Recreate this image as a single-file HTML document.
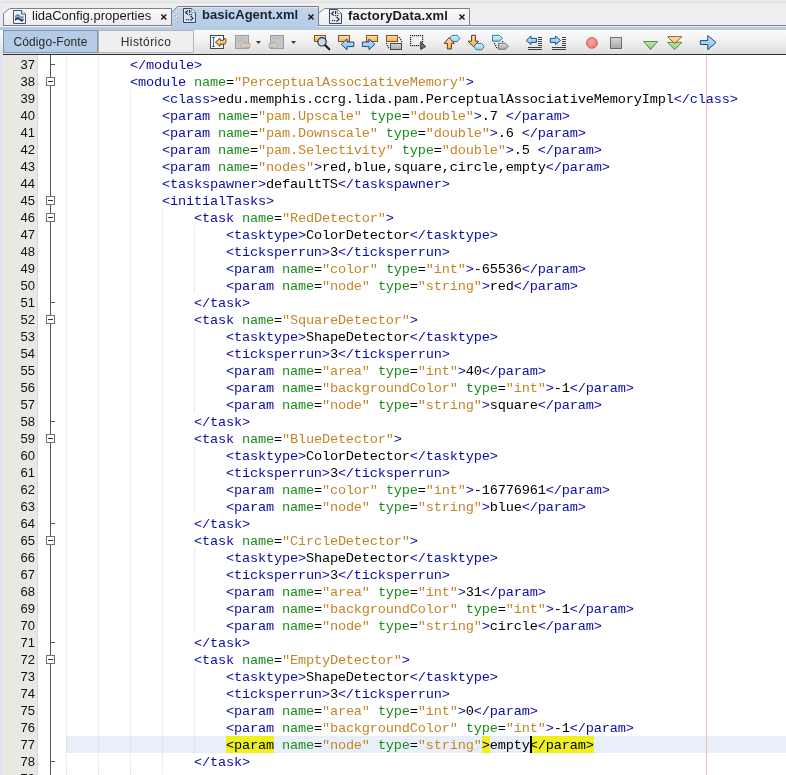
<!DOCTYPE html>
<html><head><meta charset="utf-8"><title>basicAgent.xml</title>
<style>
html,body{margin:0;padding:0;}
body{width:786px;height:775px;overflow:hidden;position:relative;background:#fff;
 font-family:"Liberation Sans",sans-serif;}
.abs{position:absolute;}
#code{position:absolute;left:0;top:0;width:786px;height:775px;overflow:hidden;will-change:transform;}
.ln{position:absolute;left:66px;height:17px;line-height:17px;white-space:pre;
 font-family:"Liberation Mono",monospace;font-size:13.6px;letter-spacing:-0.162px;color:#000;margin-top:1px;}
.t{color:#0c0ca2;}
.a{color:#1e8c1e;}
.v{color:#c4852a;}
.x{color:#000;}
.y{background:#f0f01c;}
.no{position:absolute;left:3px;width:32px;height:17px;line-height:17px;text-align:right;
 font-family:"Liberation Sans",sans-serif;font-size:13px;color:#111;}
.g{position:absolute;width:1px;background-image:linear-gradient(to bottom,#d9d9d9 50%,rgba(255,255,255,0) 50%);background-size:1px 2px;}
.fb{position:absolute;left:46px;width:7px;height:7px;border:1px solid #707070;background:#fff;}
.fb i{position:absolute;left:1px;top:3px;width:5px;height:1px;background:#333;}
.fe{position:absolute;left:50px;width:5px;height:1px;background:#555;}
</style></head><body>
<div id="code">

<div class="abs" style="left:0;top:55px;width:3px;height:720px;background:#dfe5ee"></div>
<div class="abs" style="left:3px;top:55px;width:34px;height:720px;background:#e9e8e2"></div>
<div class="abs" style="left:37px;top:55px;width:1px;height:720px;background:#d8d8d8"></div>
<div class="abs" style="left:66px;top:736px;width:720px;height:17px;background:#e9eff8"></div>
<div class="abs" style="left:50px;top:55px;width:1px;height:720px;background:#555"></div>
<div class="abs" style="left:706px;top:55px;width:1px;height:720px;background:#f2b8b8"></div>
<div class="g" style="left:66px;top:56px;height:731px"></div>
<div class="g" style="left:98px;top:56px;height:731px"></div>
<div class="g" style="left:130px;top:90px;height:697px"></div>
<div class="g" style="left:162px;top:209px;height:578px"></div>
<div class="g" style="left:194px;top:226px;height:68px"></div>
<div class="g" style="left:194px;top:328px;height:85px"></div>
<div class="g" style="left:194px;top:447px;height:68px"></div>
<div class="g" style="left:194px;top:549px;height:85px"></div>
<div class="g" style="left:194px;top:668px;height:85px"></div>
<div class="no" style="top:56px">37</div>
<div class="fe" style="top:64px"></div>
<div class="ln" style="top:56px">        <span class="t">&lt;/module&gt;</span></div>
<div class="no" style="top:73px">38</div>
<div class="fb" style="top:77px"><i></i></div>
<div class="ln" style="top:73px">        <span class="t">&lt;module</span><span class="x"> </span><span class="a">name</span><span class="x">=</span><span class="v">"PerceptualAssociativeMemory"</span><span class="t">&gt;</span></div>
<div class="no" style="top:90px">39</div>
<div class="ln" style="top:90px">            <span class="t">&lt;class&gt;</span><span class="x">edu.memphis.ccrg.lida.pam.PerceptualAssociativeMemoryImpl</span><span class="t">&lt;/class&gt;</span></div>
<div class="no" style="top:107px">40</div>
<div class="ln" style="top:107px">            <span class="t">&lt;param</span><span class="x"> </span><span class="a">name</span><span class="x">=</span><span class="v">"pam.Upscale"</span><span class="x"> </span><span class="a">type</span><span class="x">=</span><span class="v">"double"</span><span class="t">&gt;</span><span class="x">.7 </span><span class="t">&lt;/param&gt;</span></div>
<div class="no" style="top:124px">41</div>
<div class="ln" style="top:124px">            <span class="t">&lt;param</span><span class="x"> </span><span class="a">name</span><span class="x">=</span><span class="v">"pam.Downscale"</span><span class="x"> </span><span class="a">type</span><span class="x">=</span><span class="v">"double"</span><span class="t">&gt;</span><span class="x">.6 </span><span class="t">&lt;/param&gt;</span></div>
<div class="no" style="top:141px">42</div>
<div class="ln" style="top:141px">            <span class="t">&lt;param</span><span class="x"> </span><span class="a">name</span><span class="x">=</span><span class="v">"pam.Selectivity"</span><span class="x"> </span><span class="a">type</span><span class="x">=</span><span class="v">"double"</span><span class="t">&gt;</span><span class="x">.5 </span><span class="t">&lt;/param&gt;</span></div>
<div class="no" style="top:158px">43</div>
<div class="ln" style="top:158px">            <span class="t">&lt;param</span><span class="x"> </span><span class="a">name</span><span class="x">=</span><span class="v">"nodes"</span><span class="t">&gt;</span><span class="x">red,blue,square,circle,empty</span><span class="t">&lt;/param&gt;</span></div>
<div class="no" style="top:175px">44</div>
<div class="ln" style="top:175px">            <span class="t">&lt;taskspawner&gt;</span><span class="x">defaultTS</span><span class="t">&lt;/taskspawner&gt;</span></div>
<div class="no" style="top:192px">45</div>
<div class="fb" style="top:196px"><i></i></div>
<div class="ln" style="top:192px">            <span class="t">&lt;initialTasks</span><span class="t">&gt;</span></div>
<div class="no" style="top:209px">46</div>
<div class="fb" style="top:213px"><i></i></div>
<div class="ln" style="top:209px">                <span class="t">&lt;task</span><span class="x"> </span><span class="a">name</span><span class="x">=</span><span class="v">"RedDetector"</span><span class="t">&gt;</span></div>
<div class="no" style="top:226px">47</div>
<div class="ln" style="top:226px">                    <span class="t">&lt;tasktype&gt;</span><span class="x">ColorDetector</span><span class="t">&lt;/tasktype&gt;</span></div>
<div class="no" style="top:243px">48</div>
<div class="ln" style="top:243px">                    <span class="t">&lt;ticksperrun&gt;</span><span class="x">3</span><span class="t">&lt;/ticksperrun&gt;</span></div>
<div class="no" style="top:260px">49</div>
<div class="ln" style="top:260px">                    <span class="t">&lt;param</span><span class="x"> </span><span class="a">name</span><span class="x">=</span><span class="v">"color"</span><span class="x"> </span><span class="a">type</span><span class="x">=</span><span class="v">"int"</span><span class="t">&gt;</span><span class="x">-65536</span><span class="t">&lt;/param&gt;</span></div>
<div class="no" style="top:277px">50</div>
<div class="ln" style="top:277px">                    <span class="t">&lt;param</span><span class="x"> </span><span class="a">name</span><span class="x">=</span><span class="v">"node"</span><span class="x"> </span><span class="a">type</span><span class="x">=</span><span class="v">"string"</span><span class="t">&gt;</span><span class="x">red</span><span class="t">&lt;/param&gt;</span></div>
<div class="no" style="top:294px">51</div>
<div class="fe" style="top:302px"></div>
<div class="ln" style="top:294px">                <span class="t">&lt;/task&gt;</span></div>
<div class="no" style="top:311px">52</div>
<div class="fb" style="top:315px"><i></i></div>
<div class="ln" style="top:311px">                <span class="t">&lt;task</span><span class="x"> </span><span class="a">name</span><span class="x">=</span><span class="v">"SquareDetector"</span><span class="t">&gt;</span></div>
<div class="no" style="top:328px">53</div>
<div class="ln" style="top:328px">                    <span class="t">&lt;tasktype&gt;</span><span class="x">ShapeDetector</span><span class="t">&lt;/tasktype&gt;</span></div>
<div class="no" style="top:345px">54</div>
<div class="ln" style="top:345px">                    <span class="t">&lt;ticksperrun&gt;</span><span class="x">3</span><span class="t">&lt;/ticksperrun&gt;</span></div>
<div class="no" style="top:362px">55</div>
<div class="ln" style="top:362px">                    <span class="t">&lt;param</span><span class="x"> </span><span class="a">name</span><span class="x">=</span><span class="v">"area"</span><span class="x"> </span><span class="a">type</span><span class="x">=</span><span class="v">"int"</span><span class="t">&gt;</span><span class="x">40</span><span class="t">&lt;/param&gt;</span></div>
<div class="no" style="top:379px">56</div>
<div class="ln" style="top:379px">                    <span class="t">&lt;param</span><span class="x"> </span><span class="a">name</span><span class="x">=</span><span class="v">"backgroundColor"</span><span class="x"> </span><span class="a">type</span><span class="x">=</span><span class="v">"int"</span><span class="t">&gt;</span><span class="x">-1</span><span class="t">&lt;/param&gt;</span></div>
<div class="no" style="top:396px">57</div>
<div class="ln" style="top:396px">                    <span class="t">&lt;param</span><span class="x"> </span><span class="a">name</span><span class="x">=</span><span class="v">"node"</span><span class="x"> </span><span class="a">type</span><span class="x">=</span><span class="v">"string"</span><span class="t">&gt;</span><span class="x">square</span><span class="t">&lt;/param&gt;</span></div>
<div class="no" style="top:413px">58</div>
<div class="fe" style="top:421px"></div>
<div class="ln" style="top:413px">                <span class="t">&lt;/task&gt;</span></div>
<div class="no" style="top:430px">59</div>
<div class="fb" style="top:434px"><i></i></div>
<div class="ln" style="top:430px">                <span class="t">&lt;task</span><span class="x"> </span><span class="a">name</span><span class="x">=</span><span class="v">"BlueDetector"</span><span class="t">&gt;</span></div>
<div class="no" style="top:447px">60</div>
<div class="ln" style="top:447px">                    <span class="t">&lt;tasktype&gt;</span><span class="x">ColorDetector</span><span class="t">&lt;/tasktype&gt;</span></div>
<div class="no" style="top:464px">61</div>
<div class="ln" style="top:464px">                    <span class="t">&lt;ticksperrun&gt;</span><span class="x">3</span><span class="t">&lt;/ticksperrun&gt;</span></div>
<div class="no" style="top:481px">62</div>
<div class="ln" style="top:481px">                    <span class="t">&lt;param</span><span class="x"> </span><span class="a">name</span><span class="x">=</span><span class="v">"color"</span><span class="x"> </span><span class="a">type</span><span class="x">=</span><span class="v">"int"</span><span class="t">&gt;</span><span class="x">-16776961</span><span class="t">&lt;/param&gt;</span></div>
<div class="no" style="top:498px">63</div>
<div class="ln" style="top:498px">                    <span class="t">&lt;param</span><span class="x"> </span><span class="a">name</span><span class="x">=</span><span class="v">"node"</span><span class="x"> </span><span class="a">type</span><span class="x">=</span><span class="v">"string"</span><span class="t">&gt;</span><span class="x">blue</span><span class="t">&lt;/param&gt;</span></div>
<div class="no" style="top:515px">64</div>
<div class="fe" style="top:523px"></div>
<div class="ln" style="top:515px">                <span class="t">&lt;/task&gt;</span></div>
<div class="no" style="top:532px">65</div>
<div class="fb" style="top:536px"><i></i></div>
<div class="ln" style="top:532px">                <span class="t">&lt;task</span><span class="x"> </span><span class="a">name</span><span class="x">=</span><span class="v">"CircleDetector"</span><span class="t">&gt;</span></div>
<div class="no" style="top:549px">66</div>
<div class="ln" style="top:549px">                    <span class="t">&lt;tasktype&gt;</span><span class="x">ShapeDetector</span><span class="t">&lt;/tasktype&gt;</span></div>
<div class="no" style="top:566px">67</div>
<div class="ln" style="top:566px">                    <span class="t">&lt;ticksperrun&gt;</span><span class="x">3</span><span class="t">&lt;/ticksperrun&gt;</span></div>
<div class="no" style="top:583px">68</div>
<div class="ln" style="top:583px">                    <span class="t">&lt;param</span><span class="x"> </span><span class="a">name</span><span class="x">=</span><span class="v">"area"</span><span class="x"> </span><span class="a">type</span><span class="x">=</span><span class="v">"int"</span><span class="t">&gt;</span><span class="x">31</span><span class="t">&lt;/param&gt;</span></div>
<div class="no" style="top:600px">69</div>
<div class="ln" style="top:600px">                    <span class="t">&lt;param</span><span class="x"> </span><span class="a">name</span><span class="x">=</span><span class="v">"backgroundColor"</span><span class="x"> </span><span class="a">type</span><span class="x">=</span><span class="v">"int"</span><span class="t">&gt;</span><span class="x">-1</span><span class="t">&lt;/param&gt;</span></div>
<div class="no" style="top:617px">70</div>
<div class="ln" style="top:617px">                    <span class="t">&lt;param</span><span class="x"> </span><span class="a">name</span><span class="x">=</span><span class="v">"node"</span><span class="x"> </span><span class="a">type</span><span class="x">=</span><span class="v">"string"</span><span class="t">&gt;</span><span class="x">circle</span><span class="t">&lt;/param&gt;</span></div>
<div class="no" style="top:634px">71</div>
<div class="fe" style="top:642px"></div>
<div class="ln" style="top:634px">                <span class="t">&lt;/task&gt;</span></div>
<div class="no" style="top:651px">72</div>
<div class="fb" style="top:655px"><i></i></div>
<div class="ln" style="top:651px">                <span class="t">&lt;task</span><span class="x"> </span><span class="a">name</span><span class="x">=</span><span class="v">"EmptyDetector"</span><span class="t">&gt;</span></div>
<div class="no" style="top:668px">73</div>
<div class="ln" style="top:668px">                    <span class="t">&lt;tasktype&gt;</span><span class="x">ShapeDetector</span><span class="t">&lt;/tasktype&gt;</span></div>
<div class="no" style="top:685px">74</div>
<div class="ln" style="top:685px">                    <span class="t">&lt;ticksperrun&gt;</span><span class="x">3</span><span class="t">&lt;/ticksperrun&gt;</span></div>
<div class="no" style="top:702px">75</div>
<div class="ln" style="top:702px">                    <span class="t">&lt;param</span><span class="x"> </span><span class="a">name</span><span class="x">=</span><span class="v">"area"</span><span class="x"> </span><span class="a">type</span><span class="x">=</span><span class="v">"int"</span><span class="t">&gt;</span><span class="x">0</span><span class="t">&lt;/param&gt;</span></div>
<div class="no" style="top:719px">76</div>
<div class="ln" style="top:719px">                    <span class="t">&lt;param</span><span class="x"> </span><span class="a">name</span><span class="x">=</span><span class="v">"backgroundColor"</span><span class="x"> </span><span class="a">type</span><span class="x">=</span><span class="v">"int"</span><span class="t">&gt;</span><span class="x">-1</span><span class="t">&lt;/param&gt;</span></div>
<div class="no" style="top:736px">77</div>
<div class="abs" style="left:226px;top:736px;width:48px;height:17px;background:#f0f01e"></div>
<div class="abs" style="left:482px;top:736px;width:8px;height:17px;background:#f0f01e"></div>
<div class="abs" style="left:530px;top:736px;width:64px;height:17px;background:#f0f01e"></div>
<div class="ln" style="top:736px">                    <span class="x">&lt;param</span><span class="x"> </span><span class="a">name</span><span class="x">=</span><span class="v">"node"</span><span class="x"> </span><span class="a">type</span><span class="x">=</span><span class="v">"string"</span><span class="x">&gt;</span><span class="x">empty</span><span class="x">&lt;/param&gt;</span></div>
<div class="no" style="top:753px">78</div>
<div class="fe" style="top:761px"></div>
<div class="ln" style="top:753px">                <span class="t">&lt;/task&gt;</span></div>
<div class="no" style="top:770px">79</div>
<div class="ln" style="top:770px">                </div>
<div class="abs" id="caret" style="left:530px;top:736px;width:2px;height:17px;background:#000"></div>
</div>

<div id="hdr" class="abs" style="left:0;top:0;width:786px;height:55px;overflow:hidden;will-change:transform;">
<style>
#hdr .tabtxt{position:absolute;top:7px;height:18px;line-height:17px;font-size:13px;color:#1a1a1a;white-space:pre;}
#hdr .b{font-weight:bold;}
#hdr .btn{position:absolute;top:30px;height:23px;line-height:22px;text-align:center;font-size:12px;color:#2a2a2a;box-sizing:border-box;}
#hdr svg{position:absolute;overflow:visible;}
</style>
<!-- top strips -->
<div class="abs" style="left:0;top:0;width:786px;height:2px;background:#ebebeb"></div>
<div class="abs" style="left:0;top:2px;width:786px;height:1px;background:#d9dfe8"></div>
<div class="abs" style="left:0;top:3px;width:786px;height:22px;background:#eeeeee"></div>
<div class="abs" style="left:0;top:25px;width:786px;height:1px;background:#7c8188"></div>
<div class="abs" style="left:0;top:0;width:3px;height:55px;background:#e8ecf2"></div>
<!-- blue strip under tabs -->
<div class="abs" style="left:0;top:26px;width:786px;height:1px;background:#eaf1f8"></div>
<div class="abs" style="left:0;top:27px;width:786px;height:3px;background:#b6cae2"></div>
<!-- toolbar gradient -->
<div class="abs" style="left:0;top:30px;width:786px;height:24px;background:linear-gradient(to bottom,#fbfbfb 0%,#f1f1f1 45%,#dedede 100%)"></div>
<div class="abs" style="left:3px;top:54px;width:783px;height:1px;background:#2c2c2c"></div>

<!-- tabs drawn as svg -->
<svg width="786" height="30" style="left:0;top:0" shape-rendering="crispEdges">
 <defs>
  <linearGradient id="tg" x1="0" y1="0" x2="0" y2="1"><stop offset="0" stop-color="#fafafb"/><stop offset="1" stop-color="#ededf0"/></linearGradient>
  <linearGradient id="sg" x1="0" y1="0" x2="0" y2="1"><stop offset="0" stop-color="#c4d6ec"/><stop offset="1" stop-color="#b3c9e4"/></linearGradient>
 </defs>
 <!-- tab 1 -->
 <path d="M3.5 25.5 L3.5 13.5 L9.5 8.5 L171.5 8.5 L171.5 25.5 Z" fill="url(#tg)" stroke="#7c8188" stroke-width="1" shape-rendering="geometricPrecision"/>
 <!-- tab 3 -->
 <path d="M318.5 25.5 L318.5 13.5 L324.5 8.5 L469.5 8.5 L469.5 25.5 Z" fill="url(#tg)" stroke="#7c8188" stroke-width="1" shape-rendering="geometricPrecision"/>
 <!-- selected tab 2 -->
 <path d="M172 30 L172 12 L177.5 6.5 L318.5 6.5 L318.5 30 Z" fill="url(#sg)" stroke="none" shape-rendering="geometricPrecision"/>
 <path d="M178 7.5 L318 7.5" stroke="#dbe7f6" stroke-width="1" fill="none"/>
 <path d="M172 12 L177.5 6.5 L318.5 6.5 L318.5 26" fill="none" stroke="#7c8188" stroke-width="1" shape-rendering="geometricPrecision"/>
</svg>

<div class="tabtxt" style="left:32px">lidaConfig.properties</div>
<div class="tabtxt b" style="left:202px;top:6px;color:#1a2230">basicAgent.xml</div>
<div class="tabtxt b" style="left:348px;letter-spacing:.17px">factoryData.xml</div>

<!-- source/history buttons -->
<div class="btn" style="left:3px;width:95px;background:#b5cbe6;border:1px solid #7e95b4;letter-spacing:.1px">Código-Fonte</div>
<div class="btn" style="left:98px;width:96px;background:#efefef;border:1px solid #b4b4b4;letter-spacing:.42px">Histórico</div>
<!--ICONS--><svg width="786" height="56" viewBox="0 0 786 56" style="left:0;top:0">
<defs>
 <linearGradient id="or" x1="0" y1="0" x2="0" y2="1"><stop offset="0" stop-color="#fee2b6"/><stop offset="1" stop-color="#f6ae52"/></linearGradient>
 <linearGradient id="bl" x1="0" y1="0" x2="0" y2="1"><stop offset="0" stop-color="#c4e6ff"/><stop offset="1" stop-color="#7ec0f4"/></linearGradient>
 <linearGradient id="gy" x1="0" y1="0" x2="0" y2="1"><stop offset="0" stop-color="#d8d8d8"/><stop offset="1" stop-color="#a8a8a8"/></linearGradient>
 <linearGradient id="gn" x1="0" y1="0" x2="0" y2="1"><stop offset="0" stop-color="#c4e8b0"/><stop offset="1" stop-color="#8cc870"/></linearGradient>
 <linearGradient id="cy" x1="0" y1="0" x2="0" y2="1"><stop offset="0" stop-color="#d2f2fc"/><stop offset="1" stop-color="#92d4ec"/></linearGradient>
 <radialGradient id="rd" cx="0.45" cy="0.4" r="0.6"><stop offset="0" stop-color="#ffa0a0"/><stop offset="1" stop-color="#f57878"/></radialGradient>
</defs>

<!-- tab icon 1 : properties -->
<g>
 <path d="M13.5 10.5 L21.5 10.5 L25.5 14 L25.5 23.5 L13.5 23.5 Z" fill="#eef3fb" stroke="#4a525e" stroke-width="1"/>
 <path d="M21.5 10.5 L21.5 14 L25.5 14" fill="#fff" stroke="#4a525e" stroke-width="1"/>
 <path d="M15 16 C17 13.5 19 14 20 15.5 S22.5 17 23.5 15.5 L23.5 17.5 C22.5 19 21 19 20 17.5 S17 15.8 15 18 Z" fill="#5a86b8"/>
 <path d="M15 17.5 C17 15.3 19 15.8 20 17.3 S22.5 18.8 23.5 17.3 L23.5 18.3 C22.5 19.8 21 19.8 20 18.3 S17 16.4 15 18.6 Z" fill="#a0b850"/>
 <path d="M15 18.6 C17 16.4 19 17 20 18.4 S22.5 19.9 23.5 18.4 L23.5 20.6 C22.5 22 21 22 20 20.6 S17 18.8 15 21 Z" fill="#28289a"/>
</g>
<!-- tab icon 2 : xml (selected) -->
<g id="xmlico">
 <path d="M183.5 8.5 L191.5 8.5 L195.5 12.5 L195.5 22.5 L183.5 22.5 Z" fill="#d6e4f4" stroke="#3e4a5a" stroke-width="1"/>
 <path d="M191.5 8.5 L191.5 12.5 L195.5 12.5 Z" fill="#f4f8fc" stroke="#7a8798" stroke-width="0.8"/>
 <path d="M188 10.5 L185.5 12.5 L188 14.5" fill="none" stroke="#1e2834" stroke-width="1.1"/>
 <rect x="189" y="10" width="1.2" height="3" fill="#1e2834"/>
 <rect x="189" y="14" width="1.2" height="1.2" fill="#1e2834"/>
 <rect x="191" y="14" width="1.2" height="1.2" fill="#1e2834"/>
 <rect x="186" y="19" width="1.2" height="1.2" fill="#1e2834"/>
 <rect x="188" y="19" width="1.2" height="1.2" fill="#1e2834"/>
 <path d="M190.5 16 L193 18.2 L190.5 20.5" fill="none" stroke="#1e2834" stroke-width="1.1"/>
</g>
<!-- tab icon 3 : xml -->
<g transform="translate(146,1)">
 <path d="M183.5 8.5 L191.5 8.5 L195.5 12.5 L195.5 22.5 L183.5 22.5 Z" fill="#e4ecf6" stroke="#3e4a5a" stroke-width="1"/>
 <path d="M191.5 8.5 L191.5 12.5 L195.5 12.5 Z" fill="#f4f8fc" stroke="#7a8798" stroke-width="0.8"/>
 <path d="M188 10.5 L185.5 12.5 L188 14.5" fill="none" stroke="#1e2834" stroke-width="1.1"/>
 <rect x="189" y="10" width="1.2" height="3" fill="#1e2834"/>
 <rect x="189" y="14" width="1.2" height="1.2" fill="#1e2834"/>
 <rect x="191" y="14" width="1.2" height="1.2" fill="#1e2834"/>
 <rect x="186" y="19" width="1.2" height="1.2" fill="#1e2834"/>
 <rect x="188" y="19" width="1.2" height="1.2" fill="#1e2834"/>
 <path d="M190.5 16 L193 18.2 L190.5 20.5" fill="none" stroke="#1e2834" stroke-width="1.1"/>
</g>
<!-- grip dots on selected tab -->
<g fill="#f4f8fd">
 <rect x="176" y="12" width="1" height="1"/><rect x="174" y="14" width="1" height="1"/>
 <rect x="176" y="16" width="1" height="1"/><rect x="174" y="18" width="1" height="1"/>
 <rect x="176" y="20" width="1" height="1"/><rect x="174" y="22" width="1" height="1"/>
</g>
<g fill="#93a9c6">
 <rect x="177" y="13" width="1" height="1"/><rect x="175" y="15" width="1" height="1"/>
 <rect x="177" y="17" width="1" height="1"/><rect x="175" y="19" width="1" height="1"/>
 <rect x="177" y="21" width="1" height="1"/><rect x="175" y="23" width="1" height="1"/>
</g>
<!-- close x marks -->
<g stroke="#1a1a1a" stroke-width="1.5" fill="none">
 <path d="M161.3 14.5 L166.3 19.5 M166.3 14.5 L161.3 19.5"/>
 <path d="M308.5 14.5 L313.5 19.5 M313.5 14.5 L308.5 19.5"/>
 <path d="M459.5 14.5 L464.5 19.5 M464.5 14.5 L459.5 19.5"/>
</g>

<!-- 1: last edit -->
<rect x="210.5" y="35.5" width="13" height="13" fill="#f4f8fd" stroke="#3c4650" stroke-width="1"/>
<path d="M212 37.5 L215 37.5 M213.5 37.5 L213.5 46.5 M212 46.5 L215 46.5" stroke="#4a6a8c" stroke-width="1" fill="none"/>
<path d="M215.5 42.2 L220 38.3 L220 40.3 L223.3 40.3 C224 40.3 224 38.2 225 38.2 C226.3 38.2 226.3 44.2 224.5 44.2 L220 44.2 L220 46.3 Z" fill="url(#or)" stroke="#633a0a" stroke-width="1" stroke-linejoin="round"/>

<!-- 2: back (disabled) -->
<rect x="235.5" y="35.5" width="13" height="13" fill="#c6c6c8" stroke="#9c9c9c" stroke-width="1"/>
<path d="M238 38.5 L245 38.5 M238 40.5 L242 40.5" stroke="#b4b4b8" stroke-width="1"/>
<path d="M240.3 45.3 L245 41.3 L245 43.5 L250 43.5 L250 47.3 L245 47.3 L245 49.5 Z" fill="#dccdbd" stroke="#a8a098" stroke-width="0.8" stroke-linejoin="round"/>
<path d="M256 41 L261 41 L258.5 44 Z" fill="#3a3a3a"/>
<!-- 3: forward (disabled) -->
<rect x="270.5" y="35.5" width="13" height="13" fill="#c6c6c8" stroke="#9c9c9c" stroke-width="1"/>
<path d="M273 38.5 L280 38.5" stroke="#b4b4b8" stroke-width="1"/>
<path d="M278.2 45.3 L273.5 41.3 L273.5 43.5 L269 43.5 L269 47.3 L273.5 47.3 L273.5 49.5 Z" fill="#dccdbd" stroke="#a8a098" stroke-width="0.8" stroke-linejoin="round"/>
<path d="M291 41 L296 41 L293.5 44 Z" fill="#3a3a3a"/>

<!-- 4: find selection -->
<rect x="314.5" y="35.5" width="11" height="6" fill="url(#or)" stroke="#8a5214" stroke-width="1"/>
<circle cx="322" cy="41.8" r="4.2" fill="#c2dcf4" stroke="#26323e" stroke-width="1.2"/>
<path d="M325.2 45.2 L329.3 49.2" stroke="#1c1c1c" stroke-width="2.2" stroke-linecap="round"/>
<!-- 5: find prev -->
<rect x="338.5" y="35.5" width="11" height="6" fill="url(#or)" stroke="#8a5214" stroke-width="1"/>
<path d="M341.2 44.3 L347 39 L347 42 L353.8 42 L353.8 46.6 L347 46.6 L347 49.8 Z" fill="url(#bl)" stroke="#1c4c7c" stroke-width="1" stroke-linejoin="round"/>
<!-- 6: find next -->
<rect x="366.5" y="35.5" width="11" height="6" fill="url(#or)" stroke="#8a5214" stroke-width="1"/>
<path d="M374.8 44.3 L369 39 L369 42 L362.4 42 L362.4 46.6 L369 46.6 L369 49.8 Z" fill="url(#bl)" stroke="#1c4c7c" stroke-width="1" stroke-linejoin="round"/>
<!-- 7: toggle highlight -->
<rect x="386.5" y="35.5" width="11" height="6" fill="url(#or)" stroke="#8a5214" stroke-width="1"/>
<rect x="390.5" y="43.5" width="11" height="6" fill="url(#gy)" stroke="#4a4a4a" stroke-width="1"/>
<g fill="#222"><rect x="399" y="37" width="1.2" height="1.2"/><rect x="400" y="39" width="1.2" height="1.2"/><rect x="401" y="41" width="1.2" height="1.2"/><rect x="386" y="43" width="1.2" height="1.2"/><rect x="387" y="45" width="1.2" height="1.2"/><rect x="388" y="47" width="1.2" height="1.2"/></g>
<!-- 8: rect selection -->
<g fill="#1e1e1e">
 <rect x="410" y="35" width="1.2" height="1.2"/><rect x="412" y="35" width="1.2" height="1.2"/><rect x="414" y="35" width="1.2" height="1.2"/><rect x="416" y="35" width="1.2" height="1.2"/><rect x="418" y="35" width="1.2" height="1.2"/><rect x="420" y="35" width="1.2" height="1.2"/><rect x="422" y="35" width="1.2" height="1.2"/>
 <rect x="410" y="37" width="1.2" height="1.2"/><rect x="410" y="39" width="1.2" height="1.2"/><rect x="410" y="41" width="1.2" height="1.2"/><rect x="410" y="43" width="1.2" height="1.2"/><rect x="410" y="45" width="1.2" height="1.2"/>
 <rect x="422" y="37" width="1.2" height="1.2"/><rect x="422" y="39" width="1.2" height="1.2"/><rect x="422" y="41" width="1.2" height="1.2"/>
 <rect x="412" y="45" width="1.2" height="1.2"/><rect x="414" y="45" width="1.2" height="1.2"/><rect x="416" y="45" width="1.2" height="1.2"/><rect x="418" y="45" width="1.2" height="1.2"/>
</g>
<path d="M420.7 41.5 L425.6 46.6 L420.7 49.5 Z" fill="#6e6e6e" stroke="#2a2a2a" stroke-width="0.9" stroke-linejoin="round"/>
<!-- 9: prev bookmark -->
<path d="M449.6 38.5 L452 35.4 L457.4 35.4 L459.8 38.5 L457.4 41.6 L452 41.6 Z" fill="url(#cy)" stroke="#2c6c8c" stroke-width="0.9" stroke-linejoin="round"/>
<path d="M449.2 37.6 L454.2 43.4 L451.4 43.4 L451.4 49 L447.4 49 L447.4 43.4 L444.2 43.4 Z" fill="url(#or)" stroke="#633a0a" stroke-width="1" stroke-linejoin="round"/>
<!-- 10: next bookmark -->
<path d="M471.6 35.3 L475.4 35.3 L475.4 41.2 L478.5 41.2 L473.5 46.8 L468.2 41.2 L471.6 41.2 Z" fill="url(#or)" stroke="#633a0a" stroke-width="1" stroke-linejoin="round"/>
<path d="M473.9 46.6 L476.3 43.5 L481.7 43.5 L484.1 46.6 L481.7 49.8 L476.3 49.8 Z" fill="url(#cy)" stroke="#2c6c8c" stroke-width="0.9" stroke-linejoin="round"/>
<!-- 11: toggle bookmark -->
<path d="M492.5 35.4 L499.4 35.4 L502.4 38.3 L499.4 41.2 L492.5 41.2 Z" fill="url(#cy)" stroke="#2c6c8c" stroke-width="0.9" stroke-linejoin="round"/>
<path d="M498.5 43.3 L505.4 43.3 L508.4 46.3 L505.4 49.3 L498.5 49.3 Z" fill="url(#gy)" stroke="#6a6a6a" stroke-width="0.9" stroke-linejoin="round"/>
<g fill="#222"><rect x="494" y="43" width="1.2" height="1.2"/><rect x="495" y="45" width="1.2" height="1.2"/><rect x="496" y="47" width="1.2" height="1.2"/><rect x="502" y="41" width="1.2" height="1.2"/></g>
<!-- 12: shift left -->
<path d="M526.2 40.4 L531 36.1 L531 38.4 L536.4 38.4 L536.4 42.4 L531 42.4 L531 44.6 Z" fill="url(#bl)" stroke="#1c4c7c" stroke-width="1" stroke-linejoin="round"/>
<g fill="#3e3e3e">
 <rect x="538" y="37" width="4" height="1"/><rect x="538" y="39" width="4" height="1"/><rect x="538" y="41" width="4" height="1"/><rect x="538" y="43" width="4" height="1"/><rect x="538" y="45" width="4" height="1"/>
 <rect x="528" y="47" width="14" height="1"/><rect x="528" y="49" width="14" height="1"/>
</g>
<!-- 13: shift right -->
<path d="M560.6 40.4 L555.6 36.1 L555.6 38.4 L550.3 38.4 L550.3 42.4 L555.6 42.4 L555.6 44.6 Z" fill="url(#bl)" stroke="#1c4c7c" stroke-width="1" stroke-linejoin="round"/>
<g fill="#3e3e3e">
 <rect x="562" y="37" width="4" height="1"/><rect x="562" y="39" width="4" height="1"/><rect x="562" y="41" width="4" height="1"/><rect x="562" y="43" width="4" height="1"/><rect x="562" y="45" width="4" height="1"/>
 <rect x="552" y="47" width="14" height="1"/><rect x="552" y="49" width="14" height="1"/>
</g>
<!-- 14: record -->
<circle cx="591.9" cy="42.9" r="5.4" fill="url(#rd)" stroke="#a86462" stroke-width="0.9"/>
<!-- 15: stop -->
<rect x="610.5" y="37.5" width="11" height="11" fill="url(#gy)" stroke="#6a6a6a" stroke-width="1"/>
<!-- 16: green down -->
<path d="M643.6 41.5 L657.6 41.5 L650.6 49.5 Z" fill="url(#gn)" stroke="#4e7e3c" stroke-width="0.9" stroke-linejoin="round"/>
<!-- 17: double -->
<path d="M667.6 42.4 L681.8 42.4 L674.7 49.6 Z" fill="url(#gn)" stroke="#4e7e3c" stroke-width="0.9" stroke-linejoin="round"/>
<path d="M667.6 36.6 L681.8 36.6 L674.7 43.8 Z" fill="url(#or)" stroke="#8a5214" stroke-width="0.9" stroke-linejoin="round"/>
<!-- 18: blue right arrow -->
<path d="M716 42.6 L707.8 35.5 L707.8 40.6 L700.3 40.6 L700.3 44.5 L707.8 44.5 L707.8 49.7 Z" fill="url(#bl)" stroke="#1c4c7c" stroke-width="1" stroke-linejoin="round"/>
</svg>
<!--/ICONS-->
</div>

</body></html>
